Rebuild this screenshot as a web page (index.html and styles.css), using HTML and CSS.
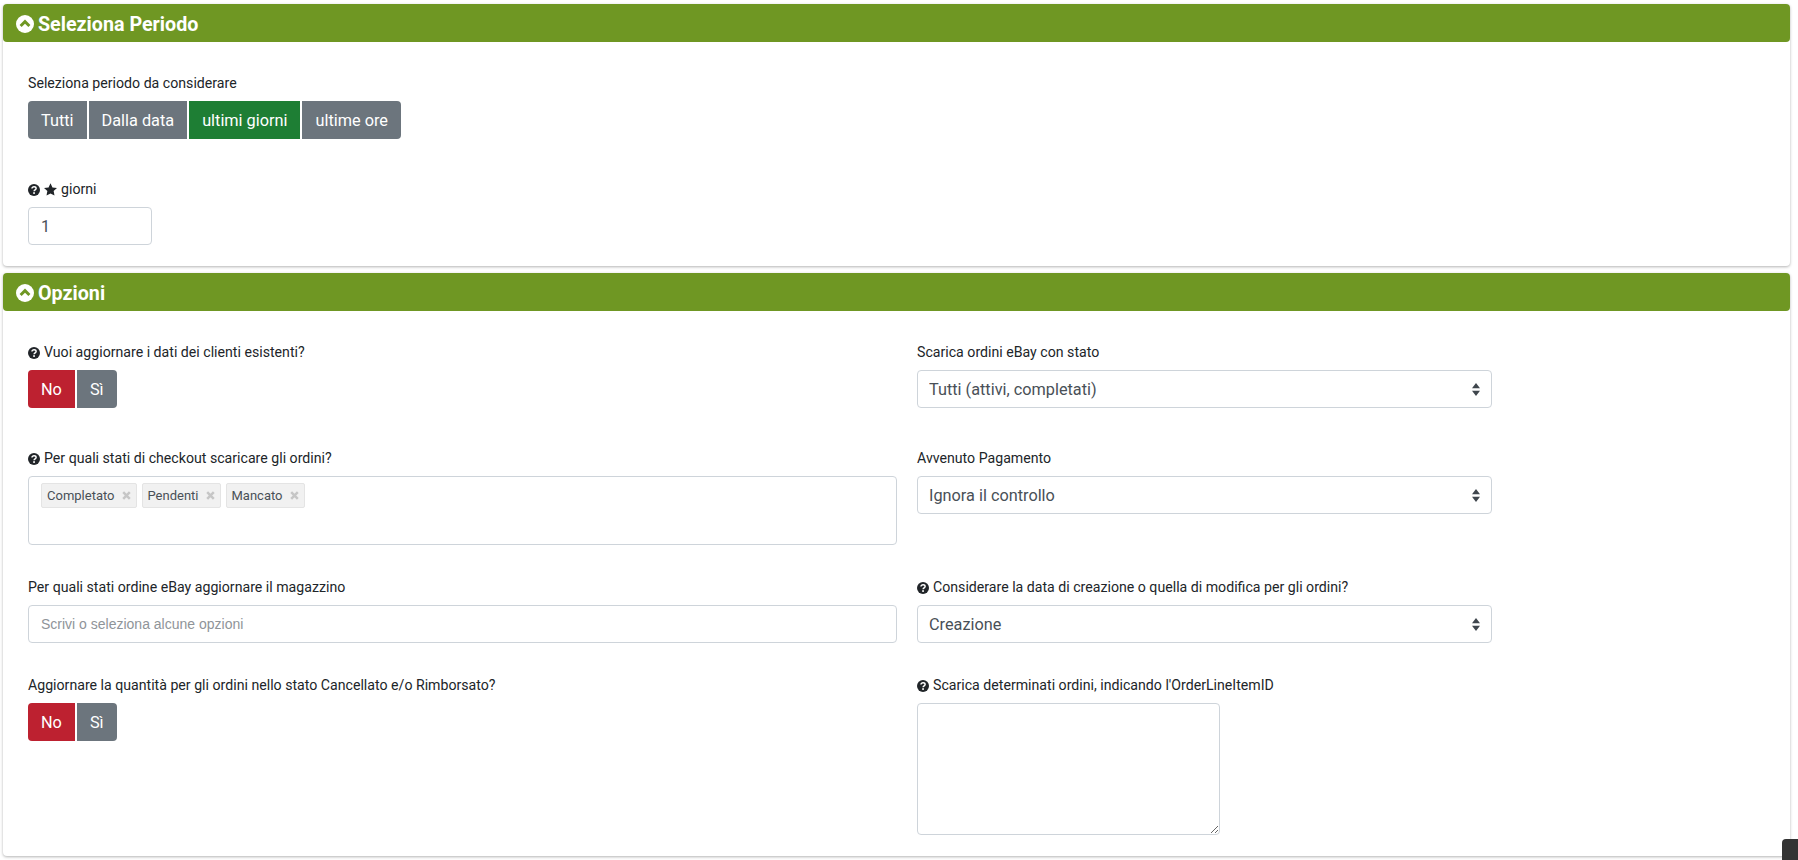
FILE: index.html
```html
<!DOCTYPE html>
<html lang="it">
<head>
<meta charset="utf-8">
<title>Opzioni</title>
<link rel="stylesheet" href="styles.css">
</head>
<body>
<svg class="defs" width="0" height="0" aria-hidden="true">
  <symbol id="chev" viewBox="0 0 18 18"><circle cx="9" cy="9" r="9" fill="#fff"/><path d="M4.600 11 9 6.600l4.400 4.400" fill="none" stroke="#6f9723" stroke-width="2.900"/></symbol>
  <symbol id="q" viewBox="0 0 12 12"><circle cx="6" cy="6" r="6" fill="#212529"/><path d="M4 4.600c0-1.200.9-1.900 2.100-1.900s2 .7 2 1.700c0 1.500-2 1.500-2 2.900" fill="none" stroke="#fff" stroke-width="1.500"/><rect x="5.200" y="8.200" width="1.700" height="1.700" fill="#fff"/></symbol>
  <symbol id="star" viewBox="0 0 13 12.400"><path d="M6.500 0 8.440 4.130 12.970 4.700 9.640 7.820 10.500 12.300 6.500 10.100 2.500 12.300 3.360 7.820.03 4.700 4.560 4.130z" fill="#212529"/></symbol>
  <symbol id="x" viewBox="0 0 9 9"><path d="M1.200 1.200l6.600 6.600M7.800 1.200 1.200 7.800" fill="none" stroke="#c6c6c6" stroke-width="2.500"/></symbol>
</svg>

<section class="panel">
  <h2 class="panel-head"><svg class="head-ico"><use href="#chev"/></svg>Seleziona Periodo</h2>
  <div class="panel-body period">
    <div class="field">
      <label class="lbl">Seleziona periodo da considerare</label>
      <div class="btn-group">
        <button class="btn grey">Tutti</button>
        <button class="btn grey">Dalla data</button>
        <button class="btn green">ultimi giorni</button>
        <button class="btn grey">ultime ore</button>
      </div>
    </div>
    <div class="field">
      <label class="lbl"><svg class="q"><use href="#q"/></svg><svg class="star"><use href="#star"/></svg>giorni</label>
      <input class="control small" value="1">
    </div>
  </div>
</section>

<section class="panel">
  <h2 class="panel-head"><svg class="head-ico"><use href="#chev"/></svg>Opzioni</h2>
  <div class="panel-body options">
    <div class="row r1">
      <div class="field">
        <label class="lbl"><svg class="q"><use href="#q"/></svg>Vuoi aggiornare i dati dei clienti esistenti?</label>
        <div class="btn-group"><button class="btn red">No</button><button class="btn grey">Sì</button></div>
      </div>
      <div class="field">
        <label class="lbl">Scarica ordini eBay con stato</label>
        <select class="control sel"><option>Tutti (attivi, completati)</option></select>
      </div>
    </div>
    <div class="row r2">
      <div class="field">
        <label class="lbl"><svg class="q"><use href="#q"/></svg>Per quali stati di checkout scaricare gli ordini?</label>
        <div class="multi">
          <span class="tag">Completato<svg class="x"><use href="#x"/></svg></span>
          <span class="tag">Pendenti<svg class="x"><use href="#x"/></svg></span>
          <span class="tag">Mancato<svg class="x"><use href="#x"/></svg></span>
        </div>
      </div>
      <div class="field">
        <label class="lbl">Avvenuto Pagamento</label>
        <select class="control sel"><option>Ignora il controllo</option></select>
      </div>
    </div>
    <div class="row r3">
      <div class="field">
        <label class="lbl">Per quali stati ordine eBay aggiornare il magazzino</label>
        <input class="control ph" placeholder="Scrivi o seleziona alcune opzioni">
      </div>
      <div class="field">
        <label class="lbl"><svg class="q"><use href="#q"/></svg>Considerare la data di creazione o quella di modifica per gli ordini?</label>
        <select class="control sel"><option>Creazione</option></select>
      </div>
    </div>
    <div class="row">
      <div class="field">
        <label class="lbl">Aggiornare la quantità per gli ordini nello stato Cancellato e/o Rimborsato?</label>
        <div class="btn-group"><button class="btn red">No</button><button class="btn grey">Sì</button></div>
      </div>
      <div class="field">
        <label class="lbl"><svg class="q"><use href="#q"/></svg>Scarica determinati ordini, indicando l'OrderLineItemID</label>
        <textarea class="control area"></textarea>
      </div>
    </div>
  </div>
</section>
<a class="to-top" aria-label="Torna su"></a>
</body>
</html>
```
FILE: styles.css
```css
* { box-sizing: border-box; }
html, body { height: 100%; }
body {
  margin: 0;
  padding: 4px 8px 0 3px;
  background: #fff;
  color: #212529;
  font-family: Roboto, "Liberation Sans", sans-serif;
  font-size: 14.15px;
  overflow: hidden;
}
.defs { position: absolute; }
.panel {
  background: #fff;
  border-radius: 4px;
  box-shadow: 0 1px 3px rgba(0, 0, 0, .3);
  margin-bottom: 7px;
}
.panel-head {
  display: flex;
  align-items: center;
  gap: 4px;
  height: 38px;
  margin: 0;
  padding: 2px 13px 0;
  background: #6f9723;
  border-radius: 4px;
  color: #fff;
  font-size: 19.7px;
  font-weight: 700;
}
.head-ico { width: 18px; height: 18px; }
.panel-body { padding: 0 25px; }
.period { padding-top: 30px; height: 224px; }
.options { padding-top: 30px; height: 545px; }
.period .field + .field { margin-top: 39px; }
.lbl {
  display: block;
  height: 22px;
  margin-bottom: 7px;
  padding-top: 1px;
  line-height: 21px;
  white-space: nowrap;
}
.q { width: 12px; height: 12px; margin-right: 4px; vertical-align: -2px; }
.star { width: 13px; height: 13px; margin-right: 4px; vertical-align: -2px; }
.btn-group { display: flex; gap: 2px; }
.btn {
  height: 38px;
  padding: 0 13px;
  border: 0;
  border-radius: 0;
  color: #fff;
  font: 400 16.3px Roboto, sans-serif;
}
.btn:first-child { border-radius: 4px 0 0 4px; }
.btn:last-child { border-radius: 0 4px 4px 0; }
.grey { background: #6c757d; }
.green { background: #1e7e34; }
.red { background: #bd2130; }
.control {
  display: block;
  height: 38px;
  width: 100%;
  padding: 0 12px;
  background: #fff;
  border: 1px solid #ced4da;
  border-radius: 4px;
  color: #495057;
  font: 400 16px Roboto, sans-serif;
}
.small { width: 124px; }
.ph { font: 400 14px "Liberation Sans", Arial, sans-serif; }
.ph::placeholder { color: #8f9499; opacity: 1; }
.sel {
  appearance: none;
  width: 575px;
  padding-left: 11px;
  font-size: 16.3px;
  background: #fff url("data:image/svg+xml,%3Csvg xmlns='http://www.w3.org/2000/svg' viewBox='0 0 4 5' preserveAspectRatio='none'%3E%3Cpath fill='%233f464d' d='M2 0L0 2h4zm0 5L0 3h4z'/%3E%3C/svg%3E") no-repeat right 11px center / 8px 13px;
}
.area { width: 303px; height: 132px; resize: vertical; padding: 6px 12px; }
.row {
  display: grid;
  grid-template-columns: 869px 1fr;
  column-gap: 20px;
}
.r1 { margin-bottom: 39px; }
.r2 { margin-bottom: 31px; }
.r3 { margin-bottom: 31px; }
.multi {
  display: flex;
  align-items: flex-start;
  gap: 5px;
  height: 69px;
  padding: 6px 12px;
  border: 1px solid #ced4da;
  border-radius: 4px;
}
.tag {
  display: flex;
  align-items: center;
  height: 25px;
  padding: 0 5px 0 5px;
  background: #f1f1f1;
  border: 1px solid #e4e4e4;
  border-radius: 2px;
  color: #495057;
  font-size: 13px;
}
.x { width: 9px; height: 9px; margin-left: 7px; }
.to-top {
  position: fixed;
  right: 0;
  bottom: 0;
  width: 16px;
  height: 21px;
  background: #333;
  border-radius: 4px 0 0 0;
}
```
